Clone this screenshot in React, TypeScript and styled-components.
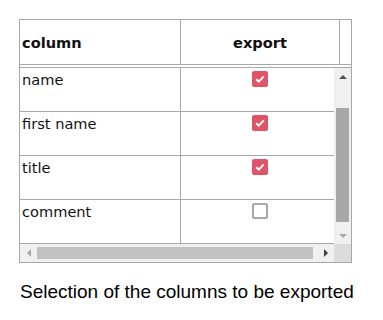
import styled, { createGlobalStyle } from "styled-components";

const GlobalStyle = createGlobalStyle`
  body {
    margin: 0;
    background: #ffffff;
  }
`;

const Page = styled.div`
  padding: 19px 0 0 19px;
  display: flex;
  flex-direction: column;
`;

const Grid = styled.div`
  width: 331px;
  border: 1px solid #a8a8a8;
  display: flex;
  flex-direction: column;
  font-family: "DejaVu Sans", Verdana, sans-serif;
  font-size: 14.6px;
  color: #111;
`;

const HeaderRow = styled.div`
  height: 44px;
  display: flex;
  border-bottom: 1px solid #a8a8a8;
  margin-bottom: 2px;
`;

const HeadCell = styled.div<{ $w: number; $center?: boolean }>`
  width: ${(p) => p.$w}px;
  flex-shrink: 0;
  display: flex;
  align-items: center;
  justify-content: ${(p) => (p.$center ? "center" : "flex-start")};
  padding-left: ${(p) => (p.$center ? 0 : 2)}px;
  box-sizing: border-box;
  font-weight: bold;
  border-right: 1px solid #a8a8a8;
  &:last-child {
    border-right: none;
  }
`;

const BodyWrap = styled.div`
  display: flex;
  border-top: 1px solid #a8a8a8;
`;

const Rows = styled.div`
  width: 314px;
  display: flex;
  flex-direction: column;
`;

const Row = styled.div`
  height: 43px;
  display: flex;
  border-bottom: 1px solid #a8a8a8;
`;

const Cell = styled.div<{ $w: number }>`
  width: ${(p) => p.$w}px;
  flex-shrink: 0;
  padding: 3px 0 0 2px;
  box-sizing: border-box;
  line-height: 17px;
  border-right: 1px solid #a8a8a8;
`;

const CheckCell = styled.div`
  flex: 1;
  display: flex;
  justify-content: center;
  padding: 3px 0 0 4px;
`;

const Box = styled.div<{ $on: boolean }>`
  width: 16px;
  height: 16px;
  box-sizing: border-box;
  border-radius: 2px;
  background: ${(p) => (p.$on ? "#e05468" : "#ffffff")};
  border: ${(p) => (p.$on ? "none" : "2px solid #a8a8a8")};
  display: flex;
  align-items: center;
  justify-content: center;
`;

const VScroll = styled.div`
  width: 17px;
  background: #f0f0f0;
  display: flex;
  flex-direction: column;
  align-items: center;
`;

const ArrowBox = styled.div`
  height: 17px;
  width: 17px;
  display: flex;
  align-items: center;
  justify-content: center;
`;

const VTrack = styled.div`
  flex: 1;
  width: 13px;
  display: flex;
  flex-direction: column;
  padding: 23px 0 5px;
`;

const VThumb = styled.div`
  flex: 1;
  background: #a8a8a8;
`;

const HRow = styled.div`
  height: 18px;
  display: flex;
`;

const HScroll = styled.div`
  width: 314px;
  background: #f0f0f0;
  display: flex;
  align-items: center;
`;

const HThumb = styled.div`
  flex: 1;
  height: 12px;
  background: #c2c2c2;
  margin-right: 4px;
`;

const Corner = styled.div`
  flex: 1;
  background: #dcdcdc;
`;

const Caption = styled.p`
  margin: 18px 0 0 1px;
  font-family: "Liberation Sans", Arial, sans-serif;
  font-size: 19px;
  line-height: 22px;
  color: #000;
`;

type Item = { name: string; on: boolean };

const items: Item[] = [
  { name: "name", on: true },
  { name: "first name", on: true },
  { name: "title", on: true },
  { name: "comment", on: false },
];

function Tri({ dir, color }: { dir: "up" | "down" | "left" | "right"; color: string }) {
  const pts = {
    up: "0,5 4,1 8,5",
    down: "0,1 4,5 8,1",
    left: "5,0 1,4 5,8",
    right: "1,0 5,4 1,8",
  }[dir];
  const vert = dir === "up" || dir === "down";
  return (
    <svg width={vert ? 8 : 6} height={vert ? 6 : 8} viewBox={vert ? "0 0 8 6" : "0 0 6 8"}>
      <polygon points={pts} fill={color} />
    </svg>
  );
}

function App() {
  return (
    <Page>
      <GlobalStyle />
      <Grid>
        <HeaderRow>
          <HeadCell $w={161}>column</HeadCell>
          <HeadCell $w={159} $center>
            export
          </HeadCell>
          <HeadCell $w={11} />
        </HeaderRow>
        <BodyWrap>
          <Rows>
            {items.map((it) => (
              <Row key={it.name}>
                <Cell $w={161}>{it.name}</Cell>
                <CheckCell>
                  <Box $on={it.on}>
                    {it.on && (
                      <svg width="10" height="8" viewBox="0 0 10 8">
                        <path d="M1.2 4.2 L3.8 6.6 L8.8 1.4" fill="none" stroke="#fff" strokeWidth="2" />
                      </svg>
                    )}
                  </Box>
                </CheckCell>
              </Row>
            ))}
          </Rows>
          <VScroll>
            <ArrowBox>
              <Tri dir="up" color="#505050" />
            </ArrowBox>
            <VTrack>
              <VThumb />
            </VTrack>
            <ArrowBox>
              <Tri dir="down" color="#a8a8a8" />
            </ArrowBox>
          </VScroll>
        </BodyWrap>
        <HRow>
          <HScroll>
            <ArrowBox>
              <Tri dir="left" color="#a8a8a8" />
            </ArrowBox>
            <HThumb />
            <ArrowBox>
              <Tri dir="right" color="#404040" />
            </ArrowBox>
          </HScroll>
          <Corner />
        </HRow>
      </Grid>
      <Caption>Selection of the columns to be exported</Caption>
    </Page>
  );
}

export default App;
